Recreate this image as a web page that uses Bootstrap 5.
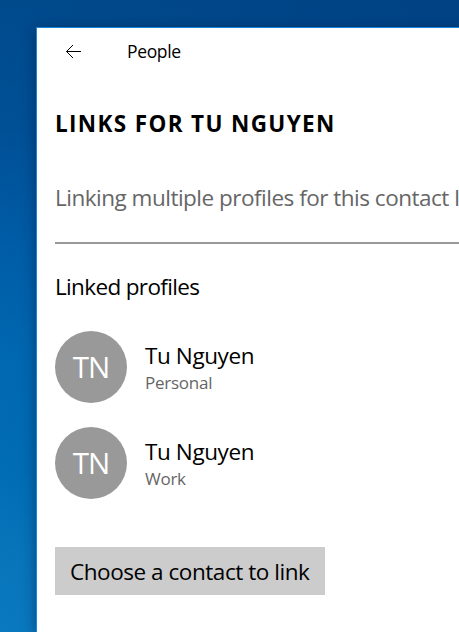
<!DOCTYPE html>
<html lang="en">
<head>
<meta charset="utf-8">
<meta name="viewport" content="width=device-width, initial-scale=1">
<title>People</title>
<link href="https://cdn.jsdelivr.net/npm/bootstrap@5.3.0/dist/css/bootstrap.min.css" rel="stylesheet">
<style>
  body { height: 100vh; font-family: "Open Sans", "Noto Sans", sans-serif; font-size: 22.5px; line-height: 30px; letter-spacing: -.5px; color: #000;
    padding: 27px 0 0 36px;
    background: linear-gradient(90deg, rgba(0,50,115,0) 0, rgba(0,50,115,.35) 459px), linear-gradient(180deg, #004a8c 0, #005096 130px, #005da7 250px, #0068b1 360px, #006cb4 460px, #0875bb 560px, #0a79c0 632px); }
  .app-window { border: 1px solid #1c84d8; border-width: 1px 0 0 1px; box-shadow: 0 2px 12px rgba(0,20,60,.45); }
  .title-bar { height: 46px; line-height: 46px; padding-left: 28px; }
  .app-name { font-size: 17.5px; letter-spacing: -.35px; margin-left: 44px; }
  .page-body { padding-left: 18px; }
  .page-title { font-size: 22.5px; line-height: 30px; letter-spacing: 1.35px; margin: 35px 0 44px; }
  .intro { color: #666; padding-bottom: 29px; border-bottom: 2px solid #999; margin-bottom: 28px; }
  .section-title { font-size: 22.5px; line-height: 30px; letter-spacing: -.65px; }
  .profiles { margin-top: 29px; gap: 24px; }
  .avatar { width: 72px; height: 72px; background: #999; color: #fff; font-size: 29.5px; font-weight: 400; letter-spacing: -1px; }
  .profile-text { margin-left: 18px; padding-top: 2px; }
  .person { letter-spacing: -.4px; }
  .kind { font-size: 17px; line-height: 24px; letter-spacing: -.25px; color: #666; }
  .btn-choose { width: 270px; height: 48px; margin-top: 48px; background: #ccc; color: #000; font-size: 22.5px; line-height: 30px; letter-spacing: -.45px; padding: 2px 0 0 15px; border: 0; }
  .btn-choose:hover { background: #bbb; color: #000; }
</style>
</head>
<body class="overflow-hidden">
<main class="app-window bg-white h-100 overflow-hidden text-nowrap">
  <header class="title-bar d-flex align-items-center">
    <svg width="18" height="18" viewBox="0 0 18 18" fill="none" stroke="#000" stroke-width="1" aria-label="Back"><path d="M1.500 9.500H16M8 3L1.500 9.500L8 16"/></svg>
    <span class="app-name">People</span>
  </header>
  <div class="page-body">
    <h1 class="page-title fw-bold">LINKS FOR TU NGUYEN</h1>
    <div class="intro">Linking multiple profiles for this contact l</div>
    <h2 class="section-title m-0 fw-normal">Linked profiles</h2>
    <div class="profiles d-flex flex-column">
      <div class="d-flex align-items-center">
        <div class="avatar rounded-circle d-flex align-items-center justify-content-center flex-shrink-0">TN</div>
        <div class="profile-text"><div class="person">Tu Nguyen</div><div class="kind">Personal</div></div>
      </div>
      <div class="d-flex align-items-center">
        <div class="avatar rounded-circle d-flex align-items-center justify-content-center flex-shrink-0">TN</div>
        <div class="profile-text"><div class="person">Tu Nguyen</div><div class="kind">Work</div></div>
      </div>
    </div>
    <button class="btn btn-choose rounded-0 text-start" type="button">Choose a contact to link</button>
  </div>
</main>
<script src="https://cdn.jsdelivr.net/npm/bootstrap@5.3.0/dist/js/bootstrap.bundle.min.js"></script>
</body>
</html>
